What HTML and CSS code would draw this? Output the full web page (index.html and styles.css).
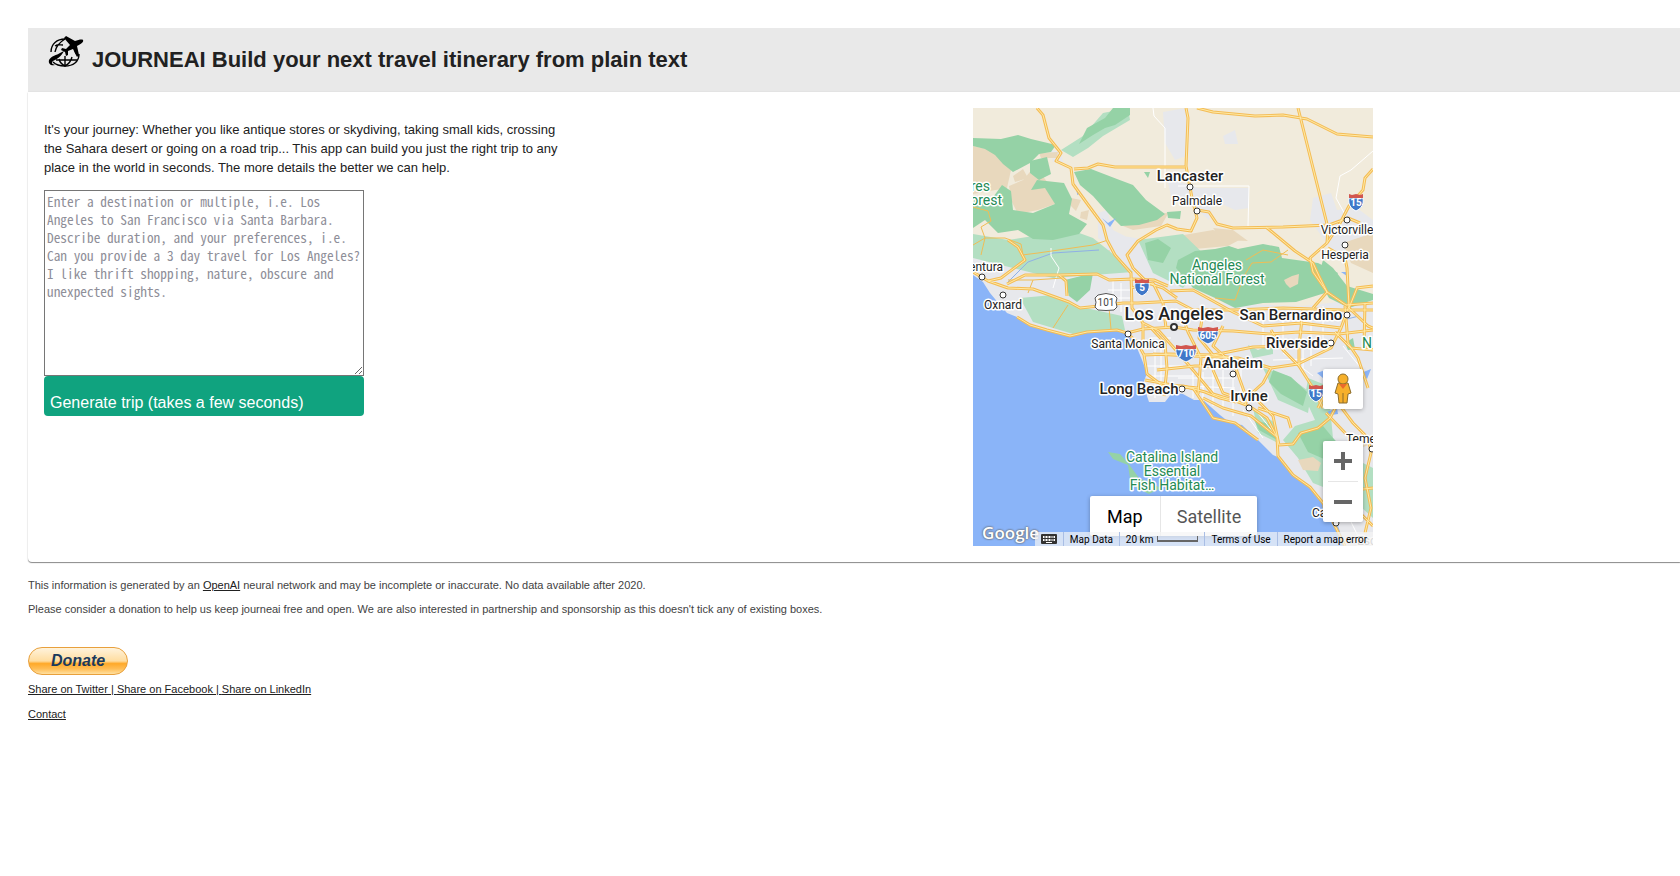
FILE: index.html
```html
<!DOCTYPE html>
<html lang="en">
<head>
    <meta charset="UTF-8">
    <title>JOURNEAI</title>
    <link rel="stylesheet" href="styles.css">
</head>
<body>
<div class="page">
    <header class="titlebar">
        <svg class="logo" viewBox="0 0 36 34" aria-hidden="true">
            <g fill="none" stroke="#000" stroke-width="1.4">
                <path d="M3 16C3 8 9 3 17 3"/>
                <path d="M31 18C31 26 25 30 17 30C10 30 7 28 5 26"/>
                <path d="M7 16C8 10 12 6 17 3M7 10C10 8 12 9 15 9"/>
                <path d="M11 23C12 27 15 29 17 30C21 28 23 25 24 21M17 20L17 30M8 24L29 24M27 14C27 17 29 19 31 20"/>
            </g>
            <path d="M35 4C36 6 33 8 29 10L31 19L29 21L25 13L20 15L20 19L18 20L17 16L13 14L14 12L18 13L22 9L16 2L18 0L27 5C30 4 34 3 35 4Z"/>
            <path d="M16 15C13 21 9 23 5 25C3 27 4 28 7 29C3 30 0 28 1 24C3 20 9 19 12 17Z"/>
        </svg>
        <h1>JOURNEAI Build your next travel itinerary from plain text</h1>
    </header>
    <main class="card">
        <form class="trip">
            <label class="intro" for="prompt">It's your journey: Whether you like antique stores or skydiving, taking small kids, crossing the Sahara desert or going on a road trip... This app can build you just the right trip to any place in the world in seconds. The more details the better we can help.</label>
            <textarea id="prompt" class="prompt" placeholder="Enter a destination or multiple, i.e. Los Angeles to San Francisco via Santa Barbara. Describe duration, and your preferences, i.e. Can you provide a 3 day travel for Los Angeles? I like thrift shopping, nature, obscure and unexpected sights."></textarea>
            <button class="generate" type="button">Generate trip (takes a few seconds)</button>
        </form>
        <div class="map">
            <svg class="tiles" viewBox="0 0 400 438" role="img" aria-label="Map of Los Angeles">
                <defs>
                    <g id="interstate">
                        <path d="M-7 -4L7 -4C8 2 6 6 0 9C-6 6 -8 2 -7 -4Z" fill="#3f78c9" stroke="#fff"/>
                        <path d="M-7 -4L-7 -8L-4 -7L0 -8L4 -7L7 -8L7 -4Z" fill="#d2564e"/>
                    </g>
                    <g id="interstate-wide">
                        <path d="M-10 -4L10 -4C11 2 7 6 0 9C-7 6 -11 2 -10 -4Z" fill="#3f78c9" stroke="#fff"/>
                        <path d="M-10 -4L-10 -8L-5 -7L0 -8L5 -7L10 -8L10 -4Z" fill="#d2564e"/>
                    </g>
                    <g id="freeways">
                        <path d="M64 0L70 7L76 30L88 45L83 53L98 60L100 76L113 94L130 117L134 132L142 147L158 165L159 200L170 215L186 223L201 240L220 262L240 286L260 292L276 298L294 310L304 329L305 348L320 367L337 379L350 395L360 414L372 438"/>
                        <path d="M101 61L115 60L125 56L142 59L212 59M224 0L240 4L282 8L310 7L334 11L364 26L400 29M325 0L355 120L354 135M213 0L215 10L213 58L219 90L224 110L218 123L204 121L194 117L183 122L165 133L154 147L160 160L175 175L190 180L204 190"/>
                        <path d="M224 102L236 104L244 116L260 120L310 119L356 117L375 110L387 115M293 119L322 143L340 155L346 168L354 184L340 200M354 135L366 117L376 98L390 82L392 70L400 61M354 135L337 150L340 164L354 184L373 197L400 195M355 140L372 150L374 160L376 198L368 220L358 240L325 256L298 260L290 275L278 286L272 296"/>
                        <path d="M0 164L15 173L35 180L60 181L85 190L96 194L107 200L126 198L150 195L165 195L203 193L220 202L260 202L310 200L369 202L400 202M15 173L28 170L52 152L45 139L35 132M34 176L52 167L86 167L93 173L94 188M86 167L124 166L136 172L159 171L181 172L195 178"/>
                        <path d="M44 209L57 217L74 222L97 228L114 224L144 222L154 225L170 221L201 219L220 222L260 223L296 226L326 224L366 226L400 222M154 225L164 234L171 247L174 266L190 278L210 278L232 284L247 290L263 294"/>
                        <path d="M158 180L180 175L190 195L193 220M197 183L220 182L240 193L260 204L290 218L328 215L368 220M171 247L196 246L240 247L280 239L325 238M178 220L192 235L194 260L191 288M170 215L170 240M208 204L215 224L228 250L225 286M180 246L220 248L265 250L298 260M172 272L205 278L225 280M230 204L226 230L240 247L262 250M184 262L222 258L255 258M330 202L326 238L326 258L340 280L350 300M298 222L310 242L326 258M372 198L375 235L385 250L395 280M392 195L391 238L400 242M362 224L378 240L400 242M384 180L376 200L395 218L400 220"/>
                        <path d="M196 278L220 280L240 310L262 315L285 332M230 290L250 300L278 308L304 329M278 286L300 308L306 337L320 336L328 325L345 320L357 310L365 295L348 280M365 295L380 315L395 330L398 345L392 370L398 400L392 425M350 400L362 390L380 382L400 380M383 180L400 178M250 218L240 238L262 258L272 286M264 290L250 285L240 262M285 300L315 310L318 320M353 305L375 328L395 330M386 404L400 418M345 300L355 280L360 262"/>
                    </g>
                </defs>
                <rect width="400" height="438" fill="#f1ebdc"/>
                <!-- built-up areas -->
                <g fill="#e7e8ec">
                    <path d="M0 148L30 140L80 136L130 140L150 128L175 132L190 150L240 195L330 198L400 190L400 438L190 438L150 300L0 200Z"/>
                    <path d="M190 4L213 0L213 48L202 52L192 35ZM194 70L225 80L276 80L276 100L262 102L240 92L236 112L220 98L198 88ZM340 90L358 85L364 102L384 100L400 112L400 155L365 150L350 130L337 112Z"/>
                    <path d="M31 41L39 40L38 47L32 46ZM250 28L262 22L265 36L252 36ZM125 105L134 102L140 122L152 128L145 145L125 130ZM78 42L88 44L90 54L80 54Z"/>
                </g>
                <!-- hills -->
                <g fill="#e8d8bd">
                    <path d="M0 38L18 42L38 62L34 80L0 86ZM36 78L50 72L62 58L75 75L82 96L65 102L45 106L38 92ZM66 45L85 44L84 50L68 50Z"/>
                    <path d="M98 90L108 92L103 103L98 98ZM108 104L116 102L114 112L107 110ZM150 118L196 104L188 118L160 122ZM205 128L240 122L270 130L255 138L210 142ZM240 120L260 122L275 133L250 132Z"/>
                    <path d="M55 155L72 148L85 154L65 162ZM85 145L104 146L108 157L92 158ZM115 145L137 142L135 158L120 162ZM370 135L400 125L400 165L378 155Z"/>
                </g>
                <!-- woodland -->
                <g fill="#b3dfc2">
                    <path d="M88 42L110 28L130 5L155 0L157 12L130 28L115 40L100 49ZM0 126L35 132L98 122L120 130L145 150L160 164L80 170L0 150Z"/>
                    <path d="M165 132L210 126L235 150L210 180L180 165ZM335 270L355 278L360 330L380 350L400 360L400 410L378 390L340 375L325 350L310 332L322 318L342 312L332 290ZM290 260L315 268L338 285L335 305L305 292ZM280 300L302 315L305 335L285 325Z"/>
                    <path d="M47 190L80 187L104 198L149 208L152 222L100 226L60 214ZM275 237L285 242L300 235L300 246L280 250Z"/>
                </g>
                <g fill="#95d2a6">
                    <path d="M106 36L114 20L132 10L140 0L157 0L157 7L142 17L132 20L120 27Z"/>
                    <path d="M0 30L28 31L45 27L58 31L83 37L78 44L66 46L57 55L40 64L30 56L22 47L12 41L0 38Z"/>
                    <path d="M57 53L74 49L78 66L66 72L57 65Z"/>
                    <path d="M0 92L18 92L29 77L38 83L40 102L60 105L82 96L72 80L58 82L64 72L91 75L99 91L96 106L114 116L106 126L80 132L60 131L45 122L25 125L12 112L0 120Z"/>
                    <path d="M101 64L118 61L144 71L160 77L173 92L192 106L184 112L166 117L148 118L135 105L120 88L107 77Z"/>
                    <path d="M171 64L177 64L175 70ZM194 104L208 103L207 111L195 110ZM172 135L185 131L198 140L190 155L175 152Z"/>
                    <path d="M205 152L222 143L242 141L256 138L265 141L290 136L306 139L309 150L345 155L365 165L352 185L323 194L290 195L262 200L242 190L220 180L203 160Z"/>
                    <path d="M350 152L360 160L374 178L400 186L400 192L376 200L356 190L345 170Z"/>
                    <path d="M300 262L318 269L334 284L330 298L308 286L296 274ZM325 325L350 318L365 336L360 355L335 344ZM92 172L120 165L117 182L104 194L96 188Z"/>
                    <path d="M372 235L380 230L382 241L375 242ZM281 312L296 316L304 332L286 322Z"/>
                </g>
                <g fill="#e8d8bd"><path d="M311 172L319 168L326 166L325 176L317 180L313 176ZM325 352L340 349L348 355L345 363L330 362ZM377 330L390 325L395 337L382 343ZM40 68L50 61L55 70L42 74Z"/></g>
                <!-- ocean -->
                <g fill="#8ab4f8">
                    <path d="M0 167L10 174L17 185L27 197L34 205L44 209L57 217L74 222L97 228L114 224L144 222L154 225L162 235L169 252L174 265L170 276L176 294L192 294L199 285L210 286L221 292L230 292L247 307L257 315L269 317L285 332L300 347L307 350L320 367L337 379L350 395L364 415L372 438L0 438Z"/>
                    <path d="M129 110L135 115L143 110L137 119ZM388 265L398 261L394 271ZM354 304L364 300L365 306L358 307ZM344 265L352 262L350 270ZM368 164L373 164L374 168Z"/>
                </g>
                <path d="M135 344L147 346L155 355L166 370L188 380L176 386L158 377L155 357L140 351Z" fill="#95d2a6"/>
                <path d="M35 174L55 154L80 145L126 142M104 83L105 87M374 211L386 208" fill="none" stroke="#8fb0e6"/>
                <!-- minor roads -->
                <path class="street" d="M180 0L181 8L192 20L192 80M205 78L276 78L275 118M400 43L378 62L367 68L363 90L374 110M78 140L78 148L86 160L80 180"/>
                <path class="street" d="M135 182L160 182M140 172L140 200M148 175L148 204M136 190L160 190M178 230L198 230M182 240L182 290M188 235L188 280M174 258L210 258M176 268L220 268M205 270L262 270M212 278L262 280M220 262L220 290M230 264L230 294M240 260L240 298M250 262L250 300M260 268L260 308M268 260L268 290M300 252L370 250M310 245L340 268M330 230L330 260M338 214L338 258M290 202L290 238M310 204L310 240M350 198L350 235M300 225L365 226M370 238L388 260M270 302L290 330M368 360L380 390M376 410L390 438M285 305L305 330"/>
                <path class="road thin" d="M0 99L15 103L18 113L8 119L12 130L32 130L48 136L50 147M12 130L8 147M12 130L0 137M49 147L65 145L120 137L135 132M35 172L60 172L55 185M95 197L80 220M136 200L138 221M242 190L262 192L271 168L279 155L298 154L315 142M60 172L90 170M273 152L290 142L315 147"/>
                <use class="road casing" href="#freeways"/>
                <use class="road core" href="#freeways"/>
                <!-- route shields -->
                <use href="#interstate" x="383" y="94"/>
                <use href="#interstate" x="169" y="179"/>
                <use href="#interstate" x="343" y="285"/>
                <use href="#interstate-wide" x="235" y="227"/>
                <use href="#interstate-wide" x="213" y="245"/>
                <path d="M125 187Q133 184 141 187L144 190Q142 194 144 199L141 202Q133 203 125 202L122 199Q124 194 122 190Z" fill="#fff" stroke="#555"/>
                <g class="shield">
                    <text x="383" y="98">15</text>
                    <text x="169" y="183">5</text>
                    <text x="343" y="289">15</text>
                    <text x="235" y="231">605</text>
                    <text x="213" y="249">710</text>
                    <text class="dark" x="133" y="198">101</text>
                </g>
                <g class="dots">
                    <circle cx="217" cy="79" r="3"/><circle cx="224" cy="103" r="3"/><circle cx="374" cy="112" r="3"/><circle cx="372" cy="137" r="3"/>
                    <circle cx="9" cy="169" r="3"/><circle cx="30" cy="187" r="3"/><circle cx="155" cy="226" r="3"/><circle cx="201" cy="219" r="3" stroke-width="2"/>
                    <circle cx="374" cy="207" r="3"/><circle cx="358" cy="235" r="3"/><circle cx="260" cy="266" r="3"/><circle cx="276" cy="300" r="3"/>
                    <circle cx="209" cy="281" r="3"/><circle cx="399" cy="341" r="3"/><circle cx="363" cy="415" r="3"/>
                </g>
                <g class="place park">
                    <text x="244" y="162">Angeles</text>
                    <text x="244" y="176">National Forest</text>
                    <text class="end" x="17" y="83">Padres</text>
                    <text class="end" x="29" y="97">Forest</text>
                    <text x="199" y="354">Catalina Island</text>
                    <text x="199" y="368">Essential</text>
                    <text x="199" y="382">Fish Habitat…</text>
                    <text class="start" x="389" y="240">N</text>
                </g>
                <g class="place town">
                    <text x="224" y="97">Palmdale</text>
                    <text x="374" y="126">Victorville</text>
                    <text x="372" y="151">Hesperia</text>
                    <text class="end" x="30" y="163">Ventura</text>
                    <text x="30" y="201">Oxnard</text>
                    <text x="155" y="240">Santa Monica</text>
                    <text class="start" x="373" y="335">Temecula</text>
                    <text class="start" x="339" y="409">Carlsbad</text>
                    <text class="start faint" x="384" y="437">Escondido</text>
                </g>
                <g class="place city">
                    <text x="217" y="73">Lancaster</text>
                    <text x="318" y="212">San Bernardino</text>
                    <text x="324" y="240">Riverside</text>
                    <text x="260" y="260">Anaheim</text>
                    <text x="276" y="293">Irvine</text>
                    <text x="166" y="286">Long Beach</text>
                </g>
                <g class="place metro"><text x="201" y="212">Los Angeles</text></g>
            </svg>
            <span class="google">Google</span>
            <button class="control pegman" type="button" aria-label="Street View">
                <svg viewBox="0 0 20 32" aria-hidden="true">
                    <path d="M5 10L15 10L18 20L15 21L14 30L6 30L5 21L2 20Z" fill="#f6b02c" stroke="#8c6d2c"/>
                    <path d="M10 20L10 30" stroke="#8c6d2c"/>
                    <circle cx="10" cy="6" r="5" fill="#f6b02c" stroke="#8c6d2c"/>
                    <path d="M6 11L14 11L10 16Z" fill="#ea6a2c"/>
                </svg>
            </button>
            <div class="control zoom">
                <button type="button" aria-label="Zoom in"><svg viewBox="0 0 18 18"><path d="M7 0H11V7H18V11H11V18H7V11H0V7H7Z"/></svg></button>
                <button type="button" aria-label="Zoom out"><svg viewBox="0 0 18 18"><path d="M0 7H18V11H0Z"/></svg></button>
            </div>
            <div class="control map-type">
                <button class="active" type="button">Map</button>
                <button type="button">Satellite</button>
            </div>
            <div class="credits">
                <button type="button" aria-label="Keyboard shortcuts">
                    <svg class="keys" viewBox="0 0 16 10"><rect width="16" height="10" rx="1" fill="#333"/><path d="M2 2H14V4H2ZM2 5H14V7H2ZM5 8H11V9H5Z" fill="#fff"/><path d="M4 2V7M7 2V7M10 2V7M12 2V7" stroke="#333"/></svg>
                </button>
                <button type="button">Map Data</button>
                <button type="button">20 km<span class="scale"></span></button>
                <a href="#">Terms of Use</a>
                <a href="#">Report a map error</a>
            </div>
        </div>
    </main>
    <footer class="footer">
        <p>This information is generated by an <a href="#">OpenAI</a> neural network and may be incomplete or inaccurate. No data available after 2020.</p>
        <p>Please consider a donation to help us keep journeai free and open. We are also interested in partnership and sponsorship as this doesn't tick any of existing boxes.</p>
        <form><button class="donate" type="button">Donate</button></form>
        <p class="share"><a href="#">Share on Twitter | </a><a href="#">Share on Facebook | </a><a href="#">Share on LinkedIn</a></p>
        <p><a href="#">Contact</a></p>
    </footer>
</div>
</body>
</html>
```
FILE: styles.css
```css
body {
    margin: 0;
    background-color: white;
    color: #212121;
    font-family: "Liberation Sans", Arial, sans-serif;
}
button {
    font-family: inherit;
    border: 0;
    padding: 0;
    cursor: pointer;
}
.page {
    padding: 28px 0 28px 28px;
}
.titlebar {
    display: flex;
    align-items: flex-start;
    gap: 8px;
    height: 64px;
    box-sizing: border-box;
    padding: 8px 20px;
    background-color: #e9e9e9;
}
.titlebar h1 {
    margin: 0;
    font-size: 22px;
    line-height: 48px;
}
.logo {
    width: 36px;
    height: 34px;
}
.card {
    display: grid;
    grid-template-columns: 13fr 20fr;
    padding: 16px;
    border-bottom-left-radius: 4px;
    box-shadow: 0 1px 1px rgba(0, 0, 0, 0.45), 0 0 2px rgba(0, 0, 0, 0.1);
}
.trip {
    display: flex;
    flex-direction: column;
    align-items: flex-start;
    padding-top: 12px;
}
.intro {
    max-width: 532px;
    margin-bottom: 13px;
    font-size: 13px;
    line-height: 19px;
}
.prompt {
    box-sizing: border-box;
    width: 320px;
    height: 186px;
    padding: 2px;
    border: 1px solid #767676;
    font-family: "Noto Sans Mono CJK JP", "Noto Sans Mono CJK SC", monospace;
    line-height: 18px;
}
.prompt::placeholder {
    color: #8e8e98;
}
.generate {
    width: 320px;
    height: 40px;
    padding: 14px 6px 0;
    border-radius: 4px;
    background-color: #10a37f;
    color: white;
    font-size: 16px;
    text-align: left;
}
.map {
    position: relative;
    justify-self: center;
    width: 400px;
    overflow: hidden;
    font-family: Roboto, Arial, sans-serif;
}
.tiles {
    display: block;
    width: 100%;
}
.street {
    fill: none;
    stroke: white;
}
.road {
    fill: none;
    stroke-linejoin: round;
}
.road.thin {
    stroke: #f0bd55;
}
.road.casing {
    stroke: #f4bc55;
    stroke-width: 3px;
}
.road.core {
    stroke: #ffeaa6;
}
.shield {
    fill: white;
    font-size: 10px;
    font-weight: 700;
    text-anchor: middle;
}
.shield .dark {
    fill: #444;
    font-weight: 400;
}
.dots {
    fill: white;
    stroke: #333;
}
.place {
    fill: #222;
    stroke: white;
    stroke-width: 3px;
    stroke-linejoin: round;
    paint-order: stroke;
    text-anchor: middle;
}
.place .start {
    text-anchor: start;
}
.place .end {
    text-anchor: end;
}
.park {
    fill: #248a54;
    font-size: 14px;
}
.town {
    font-size: 12px;
}
.town .faint {
    fill: #999;
}
.city {
    font-size: 15px;
    font-weight: 500;
}
.metro {
    font-size: 18px;
    font-weight: 500;
}
.google {
    position: absolute;
    left: 9px;
    bottom: 2px;
    color: white;
    font-family: "Open Sans", sans-serif;
    font-size: 17px;
    font-weight: 600;
    line-height: 22px;
    text-shadow: 0 0 2px #666, 0 0 2px #666;
}
.control {
    position: absolute;
    background-color: white;
    border-radius: 2px;
    box-shadow: 0 1px 4px rgba(0, 0, 0, 0.3);
}
.control button {
    background-color: transparent;
}
.pegman {
    right: 10px;
    bottom: 137px;
    width: 40px;
    height: 40px;
}
.pegman svg {
    display: block;
    height: 32px;
    margin: auto;
}
.zoom {
    right: 10px;
    bottom: 24px;
    width: 40px;
}
.zoom button {
    display: flex;
    align-items: center;
    justify-content: center;
    width: 100%;
    height: 40px;
}
.zoom button + button {
    position: relative;
    height: 41px;
}
.zoom button + button::before {
    content: "";
    position: absolute;
    top: 0;
    left: 5px;
    right: 5px;
    border-top: 1px solid #e6e6e6;
}
.zoom svg {
    width: 18px;
    fill: #666;
}
.map-type {
    display: flex;
    left: 117px;
    bottom: 10px;
}
.map-type button {
    height: 40px;
    padding: 0 16px;
    color: #565656;
    font-size: 18px;
}
.map-type button + button {
    border-left: 1px solid #e6e6e6;
}
.map-type .active {
    padding: 0 17px;
    color: black;
}
.credits {
    position: absolute;
    right: 0;
    bottom: 0;
    display: flex;
    height: 14px;
    background-color: rgba(245, 245, 245, 0.7);
}
.credits button,
.credits a {
    display: flex;
    align-items: center;
    padding: 0 6px;
    border-left: 1px solid #a9bee5;
    background-color: transparent;
    color: black;
    font-family: inherit;
    font-size: 10px;
    text-decoration: none;
    white-space: nowrap;
}
.credits :first-child {
    border-left: 0;
}
.keys {
    width: 16px;
    height: 10px;
}
.scale {
    width: 41px;
    height: 6px;
    margin-left: 4px;
    border: solid #666;
    border-width: 0 1px 2px;
    box-sizing: border-box;
}
.credits .scale {
    border-left: 1px solid #666;
}
.footer {
    padding-top: 15px;
    font-size: 11px;
    line-height: 16px;
    color: #424242;
}
.footer p {
    margin: 0 0 8px;
}
.footer a {
    color: #212121;
}
.donate {
    display: block;
    width: 100px;
    height: 28px;
    margin-top: 30px;
    border: 1px solid #e8a03c;
    border-radius: 14px;
    background: linear-gradient(#fff3dc, #ffdda0 50%, #ffa929 60%, #ffbd55 80%, #ffe0a0);
    color: #1b3a5c;
    font-size: 16px;
    font-style: italic;
    font-weight: 700;
}
.footer .share {
    margin: 6px 0 9px;
}
```
